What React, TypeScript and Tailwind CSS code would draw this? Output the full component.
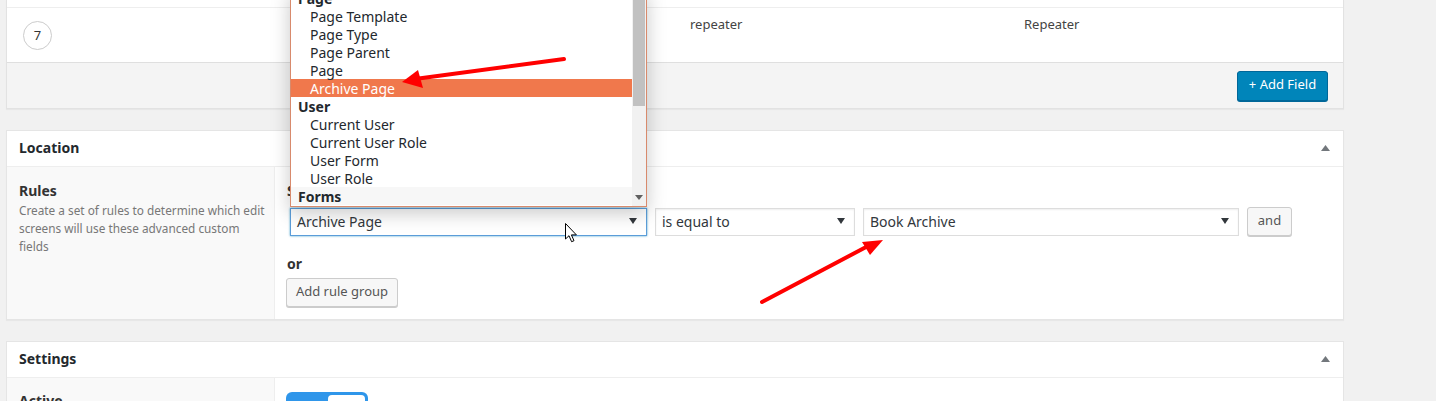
import React from "react";

type Opt = { label: string; group?: boolean; active?: boolean };

const options: Opt[] = [
  { label: "Page", group: true },
  { label: "Page Template" },
  { label: "Page Type" },
  { label: "Page Parent" },
  { label: "Page" },
  { label: "Archive Page", active: true },
  { label: "User", group: true },
  { label: "Current User" },
  { label: "Current User Role" },
  { label: "User Form" },
  { label: "User Role" },
  { label: "Forms", group: true },
];

function Caret() {
  return (
    <svg width="8" height="6" viewBox="0 0 8 6" className="shrink-0">
      <path d="M0 0h8L4 6z" fill="#32373c" />
    </svg>
  );
}

function Select({ value, width, focused }: { value: string; width: string; focused?: boolean }) {
  return (
    <div
      className={`flex h-[28px] items-center justify-between bg-white pb-[1px] pl-[6px] pr-[9px] text-[14px] text-[#32373c] ${width} ${
        focused ? "border border-[#5b9dd9] shadow-[0_0_2px_rgba(30,140,190,0.8)]" : "border border-[#ddd] shadow-[inset_0_1px_2px_rgba(0,0,0,0.07)]"
      }`}
    >
      <span>{value}</span>
      <Caret />
    </div>
  );
}

function PanelHeader({ title }: { title: string }) {
  return (
    <div className="flex h-[36px] items-center justify-between border-b border-[#eee] pb-[2px] pl-[12px] pr-[13px]">
      <span className="text-[14px] font-bold text-[#23282d]">{title}</span>
      <svg width="9" height="6" viewBox="0 0 9 6">
        <path d="M4.5 0L9 6H0z" fill="#72777c" />
      </svg>
    </div>
  );
}

function Button({ children, className = "" }: { children: React.ReactNode; className?: string }) {
  return (
    <div
      className={`flex items-center justify-center rounded-[3px] border border-[#ccc] bg-[#f7f7f7] pb-[1px] text-[13px] text-[#555] shadow-[0_1px_0_#ccc] ${className}`}
    >
      {children}
    </div>
  );
}

export default function App() {
  return (
    <div className="relative h-[401px] w-[1436px] overflow-hidden bg-[#f1f1f1] font-['Noto_Sans',sans-serif] text-[#23282d]">
      <div className="flex w-[1344px] flex-col gap-[21px] pl-[6px]">
        {/* Fields panel */}
        <div className="border-x border-b border-[#e2e2e2] bg-white shadow-[0_1px_1px_rgba(0,0,0,0.04)]">
          <div className="h-[8px] border-b border-[#eee]" />
          <div className="flex h-[55px] items-start border-b border-[#dfdfdf] text-[13px] text-[#444]">
            <div className="w-[683px] pl-[16px] pt-[13px]">
              <div className="flex h-[29px] w-[29px] items-center justify-center rounded-full border border-[#ccc] text-[13px] text-[#333]">
                7
              </div>
            </div>
            <div className="w-[334px] pt-[7px] leading-[18px]">repeater</div>
            <div className="pt-[7px] leading-[18px]">Repeater</div>
          </div>
          <div className="flex h-[45px] items-center justify-end bg-[#f4f4f4] pr-[15px]">
            <div className="flex h-[30px] w-[91px] items-center justify-center rounded-[3px] border border-[#006799] bg-[#0085ba] pb-[1px] text-[13px] text-white shadow-[0_1px_0_#006799]">
              + Add Field
            </div>
          </div>
        </div>

        {/* Location panel */}
        <div className="border border-[#e5e5e5] bg-white shadow-[0_1px_1px_rgba(0,0,0,0.04)]">
          <PanelHeader title="Location" />
          <div className="flex h-[152px]">
            <div className="w-[268px] border-r border-[#eee] bg-[#f9f9f9] pl-[12px] pr-[2px] pt-[15px]">
              <div className="text-[14px] font-bold leading-[18px] text-[#333]">Rules</div>
              <p className="mt-[1px] whitespace-nowrap text-[11.8px] leading-[18px] text-[#777]">
                Create a set of rules to determine which edit
                <br />
                screens will use these advanced custom
                <br />
                fields
              </p>
            </div>
            <div className="flex-1 pl-[12px] pt-[15px]">
              <div className="text-[14px] font-bold leading-[18px] text-[#333]">Show this field group if</div>
              <div className="ml-[3px] mt-[7px] flex items-center gap-[8px]">
                <Select value="Archive Page" width="w-[357px]" focused />
                <Select value="is equal to" width="w-[200px]" />
                <Select value="Book Archive" width="w-[376px]" />
                <Button className="h-[29px] w-[45px]">and</Button>
              </div>
              <div className="mt-[19px] text-[14px] font-bold leading-[18px] text-[#333]">or</div>
              <Button className="ml-[-1px] mt-[5px] h-[29px] w-[112px]">Add rule group</Button>
            </div>
          </div>
        </div>

        {/* Settings panel */}
        <div className="border border-[#e5e5e5] bg-white">
          <PanelHeader title="Settings" />
          <div className="flex h-[60px]">
            <div className="w-[268px] border-r border-[#eee] bg-[#f9f9f9] pl-[12px] pt-[14px]">
              <div className="text-[14px] font-bold leading-[18px] text-[#333]">Active</div>
            </div>
            <div className="flex-1 pl-[11px] pt-[14px]">
              <div className="flex h-[26px] w-[82px] items-start justify-end rounded-[6px] bg-[#2f96ea] pr-[3px] pt-[3px]">
                <div className="h-[20px] w-[37px] rounded-[4px] bg-white" />
              </div>
            </div>
          </div>
        </div>
      </div>

      {/* open select dropdown */}
      <div className="absolute left-[290px] top-[-12px] flex h-[219px] w-[357px] border border-[#d88a6c] bg-white text-[14px] text-[#23282d] shadow-[0_6px_18px_rgba(0,0,0,0.22)]">
        <div className="flex-1">
          {options.map((o, i) => (
            <div
              key={i}
              className={`flex h-[18px] items-center ${o.group ? "pl-[7px] font-bold" : "pl-[19px]"} ${
                o.active ? "bg-[#f0784c] text-white" : ""
              } ${o.label === "Forms" ? "bg-[#f7f7f7]" : ""}`}
            >
              {o.label}
            </div>
          ))}
        </div>
        <div className="relative w-[14px] bg-[#f1f1f1]">
          <div className="ml-[1px] h-[117px] w-[12px] bg-[#c1c1c1]" />
          <svg width="8" height="5" viewBox="0 0 8 5" className="absolute bottom-[6px] left-[3px]">
            <path d="M0 0h8L4 5z" fill="#606060" />
          </svg>
        </div>
      </div>

      {/* annotations */}
      <svg className="pointer-events-none absolute inset-0" width="1436" height="401">
        <line x1="564" y1="59" x2="415" y2="79" stroke="#f00" strokeWidth="4" strokeLinecap="round" />
        <path d="M402 82L418 70L423 88z" fill="#f00" />
        <line x1="762" y1="302" x2="868" y2="246" stroke="#f00" strokeWidth="4" strokeLinecap="round" />
        <path d="M883 240L862 242L870 255z" fill="#f00" />
        {/* mouse pointer */}
        <path
          d="M565.5 223.5v15.5l3.5-3.3 2.6 6 2.4-1-2.6-5.8h5z"
          fill="#fff"
          stroke="#000"
          strokeWidth="1"
          strokeLinejoin="round"
        />
      </svg>
    </div>
  );
}
